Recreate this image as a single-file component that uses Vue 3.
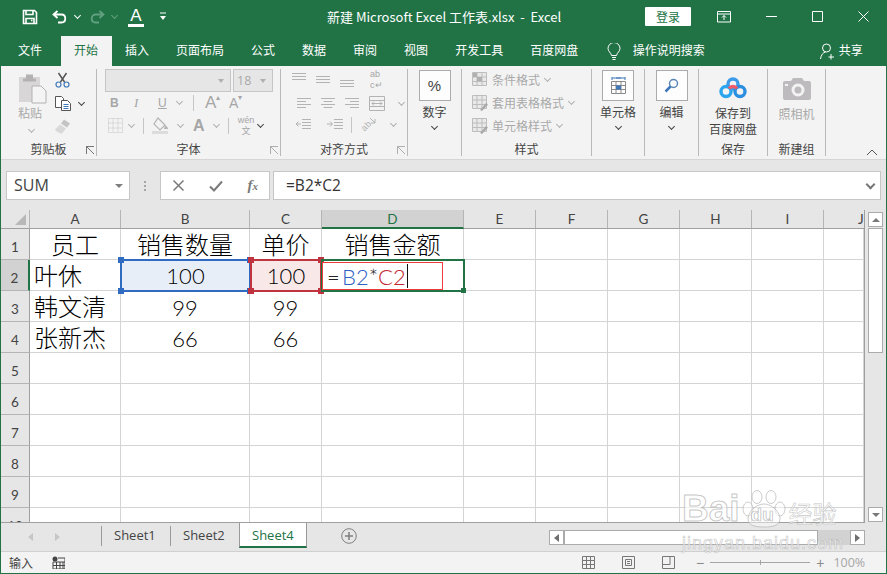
<template>
  <div class="excel">
    <div class="titlebar">
      <div class="qat">
        <svg class="ic save" width="16" height="16" viewBox="0 0 16 16"><path d="M1.500 1.500h11l2 2v11h-13z M4 1.500v4h7v-4 M4 14.500v-5h8v5 M9 11.500h1.500" fill="none" stroke="#fff" stroke-width="1.600"/></svg>
        <svg class="ic undo" width="16" height="16" viewBox="0 0 16 16"><path d="M5.500 2L1.500 5.500 5.500 9M2 5.500h7.500c5 0 5 8 0 8H6" fill="none" stroke="#fff" stroke-width="1.800"/></svg>
        <i class="chev white"></i>
        <svg class="ic redo" width="16" height="16" viewBox="0 0 16 16"><path d="M10.500 2L14.500 5.500 10.500 9M14 5.500H6.500c-5 0-5 8 0 8H10" fill="none" stroke="#62a07f" stroke-width="1.800"/></svg>
        <i class="chev dim"></i>
        <div class="qat-a"><span>A</span></div>
        <svg class="ic custom" width="8" height="9" viewBox="0 0 8 9"><path d="M1 1h6" stroke="#fff"/><path d="M1 4h6L4 8z" fill="#fff"/></svg>
      </div>
      <div class="doc-title">新建 Microsoft Excel 工作表.xlsx&nbsp; -&nbsp; Excel</div>
      <button class="login">登录</button>
      <div class="winbtns">
        <svg width="14" height="12" viewBox="0 0 14 12"><path d="M.5.500h13v10.500H.5zM.5 3h13M7 9V4.500M5 6.500l2-2 2 2" fill="none" stroke="#fff"/></svg>
        <svg width="11" height="11" viewBox="0 0 11 11"><path d="M0 5.500h11" stroke="#fff"/></svg>
        <svg width="11" height="11" viewBox="0 0 11 11"><path d="M.5.500h10v10H.5z" fill="none" stroke="#fff"/></svg>
        <svg width="11" height="11" viewBox="0 0 11 11"><path d="M.5.500l10 10M10.500.500l-10 10" fill="none" stroke="#fff"/></svg>
      </div>
    </div>

    <div class="tabs">
      <span v-for="t in ribbonTabs" :key="t" class="tab" :class="{ active: t === '开始', file: t === '文件' }">{{ t }}</span>
      <svg class="bulb" width="14" height="18" viewBox="0 0 14 18"><path d="M4.500 12.500C4 9.500 1 8.500 1 5.500a6 6 0 0 1 12 0c0 3-3 4-3.500 7zM5 14.500h4M5.500 16.500h3" fill="none" stroke="#fff"/></svg>
      <span class="tell">操作说明搜索</span>
      <svg class="person" width="15" height="17" viewBox="0 0 15 17"><circle cx="6.500" cy="5" r="4" fill="none" stroke="#fff"/><path d="M.5 16c.5-4 2.500-6.500 5-7M11 11v5.500M8.500 14h5.500" fill="none" stroke="#fff"/></svg>
      <span class="share">共享</span>
    </div>

    <div class="ribbon">
      <div class="group g-clip">
        <div class="gbody clip">
          <div class="paste">
            <svg width="30" height="31" viewBox="0 0 30 31"><path d="M1 4h21v25H1z" fill="#d9d6d8"/><path d="M8 1.500h7v4h3v3H5v-3h3z" fill="#b4b1b3"/><path d="M14 13h9l5 5v12H14z" fill="#f5f4f5" stroke="#b4b1b3"/></svg>
            <span class="off">粘贴</span>
            <i class="chev soft"></i>
          </div>
          <div class="clip-tools">
            <svg width="15" height="16" viewBox="0 0 15 16"><path d="M3.500 1l6 9M11.500 1l-6 9" stroke="#555" stroke-width="1.500"/><circle cx="3.500" cy="12.500" r="2.500" fill="none" stroke="#3f77b8" stroke-width="1.200"/><circle cx="11.500" cy="12.500" r="2.500" fill="none" stroke="#3f77b8" stroke-width="1.200"/></svg>
            <div class="row-g">
              <svg width="16" height="15" viewBox="0 0 16 15"><path d="M.5.500h6l2 2v9H.5z" fill="#fff" stroke="#555"/><path d="M6.500 4.500h6l3 3v7h-9z" fill="#fff" stroke="#555"/><path d="M8.500 8.500h5M8.500 10.500h5M8.500 12.500h5" stroke="#3f77b8"/></svg>
              <i class="chev dark"></i>
            </div>
            <svg width="16" height="15" viewBox="0 0 16 15"><path d="M9 .5l6 4-3 4-6-4z" fill="#c4c4c4"/><path d="M5 5.500l6 4-4 5c-3 0-6-2-7-4z" fill="#d9d9d9"/></svg>
          </div>
        </div>
        <div class="glabel"><span></span><span>剪贴板</span><i class="launch"></i></div>
      </div>

      <div class="group g-font">
        <div class="gbody font">
          <div class="row-g fonts">
            <div class="fbox name"><i class="down"></i></div>
            <div class="fbox size"><span>18</span><i class="down"></i></div>
          </div>
          <div class="row-g frow r2">
            <b class="fb">B</b><em class="fi">I</em><u class="fu">U</u><i class="chev soft"></i>
            <span class="vsep"></span>
            <span class="aa">A<sup>▴</sup></span><span class="aa small">A<sup>▾</sup></span>
          </div>
          <div class="row-g frow r3">
            <svg width="15" height="15" viewBox="0 0 15 15"><path d="M.5.500h14v14H.5zM5 .5v14M10 .5v14M.5 5h14M.5 10h14" fill="none" stroke="#c2c2c2" stroke-dasharray="1 1"/></svg>
            <i class="chev soft"></i>
            <span class="vsep"></span>
            <svg width="18" height="17" viewBox="0 0 18 17"><path d="M6 1l7 7-5 5-6-6z" fill="none" stroke="#b5b5b5" stroke-width="1.200"/><path d="M13 8c2 1 3 3 3 4H12z" fill="#b5b5b5"/><path d="M0 14h16v3H0z" fill="#dcdcdc"/></svg>
            <i class="chev soft"></i>
            <b class="fcolor">A</b>
            <i class="chev soft"></i>
            <span class="vsep"></span>
            <span class="wen"><small>wén</small><small class="wen-cn">文</small></span>
            <i class="chev dark"></i>
          </div>
        </div>
        <div class="glabel"><span></span><span>字体</span><i class="launch off-l"></i></div>
      </div>

      <div class="group g-align">
        <div class="gbody align">
          <div class="arow r1">
            <svg v-for="d in alignTop" :key="d" width="14" height="16" viewBox="0 0 14 16"><path :d="d" stroke="#b3b3b3"/></svg>
            <span class="wrap">ab<br>c↵</span>
          </div>
          <div class="arow r2">
            <svg v-for="d in alignMid" :key="d" width="14" height="11" viewBox="0 0 14 11"><path :d="d" stroke="#b3b3b3"/></svg>
            <svg width="16" height="15" viewBox="0 0 16 15"><path d="M.5.500h15v14H.5zM.5 4.500h15M.5 10.500h15M3 7.500h10M5 5.500l-2 2 2 2M11 5.500l2 2-2 2" fill="none" stroke="#b3b3b3"/></svg>
            <i class="chev soft"></i>
          </div>
          <div class="arow r3">
            <svg width="16" height="11" viewBox="0 0 16 11"><path d="M7 .5h9M7 3.500h9M7 6.500h9M7 9.500h9M6 5H1M3.500 2.500L1 5l2.500 2.500" fill="none" stroke="#b3b3b3"/></svg>
            <svg width="16" height="11" viewBox="0 0 16 11"><path d="M7 .5h9M7 3.500h9M7 6.500h9M7 9.500h9M0 5h5M3 2.500L5.500 5 3 7.500" fill="none" stroke="#b3b3b3"/></svg>
            <span class="vsep"></span>
            <svg width="17" height="17" viewBox="0 0 17 17"><text x="1" y="13" font-size="9" fill="#b3b3b3" font-family="Liberation Sans" transform="rotate(-45 6 10)">ab</text><path d="M10 2l5 5M15 3v4h-4" fill="none" stroke="#b3b3b3"/></svg>
            <i class="chev soft"></i>
          </div>
        </div>
        <div class="glabel"><span></span><span>对齐方式</span><i class="launch off-l"></i></div>
      </div>

      <div class="group g-num">
        <div class="gbody big">
          <div class="bigbox pct">%</div>
          <span class="lbl">数字</span>
          <i class="chev dark"></i>
        </div>
        <div class="glabel"></div>
      </div>

      <div class="group g-style">
        <div class="gbody styles">
          <div v-for="(s, i) in styleRows" :key="s" class="srow">
            <svg width="16" height="16" viewBox="0 0 16 16">
              <path d="M.5.500h14v13H.5zM.5 5h14M.5 9.500h14M5 .5v13M10 .5v13" fill="#e9e9e9" stroke="#bdbdbd"/>
              <path v-if="i === 0" d="M1 1h4v4H1zM5 5h5v4H5z" fill="#b0b0b0"/>
              <path v-else d="M8 15l6-7 2 1.500-6 6.500z" fill="#a9a9a9"/>
            </svg>
            <span>{{ s }}</span>
            <i class="chev soft"></i>
          </div>
        </div>
        <div class="glabel"><span></span><span>样式</span><span></span></div>
      </div>

      <div class="group g-cell">
        <div class="gbody big">
          <div class="bigbox">
            <svg width="15" height="17" viewBox="0 0 15 17"><path d="M1 1h13M1 0v3M14 0v3M5 1h5" fill="none" stroke="#3f77b8"/><path d="M.5 4.500h14v12H.5zM.5 8.500h14M.5 12.500h14M5 4.500v12M10 4.500v12" fill="none" stroke="#8a8a8a"/><path d="M5 8.500h5v4H5z" fill="#3f77b8"/></svg>
          </div>
          <span class="lbl">单元格</span>
          <i class="chev dark"></i>
        </div>
        <div class="glabel"></div>
      </div>

      <div class="group g-edit">
        <div class="gbody big">
          <div class="bigbox">
            <svg width="15" height="15" viewBox="0 0 15 15"><circle cx="9.500" cy="5.500" r="4" fill="none" stroke="#5b86b8" stroke-width="1.500"/><path d="M6.500 8.500L1.500 13.500" stroke="#3f77b8" stroke-width="2.500"/></svg>
          </div>
          <span class="lbl">编辑</span>
          <i class="chev dark"></i>
        </div>
        <div class="glabel"></div>
      </div>

      <div class="group g-save">
        <div class="gbody big cloud">
          <svg width="28" height="22" viewBox="0 0 28 22">
            <circle cx="14" cy="7" r="5" fill="none" stroke="#3b9be8" stroke-width="3.400"/>
            <circle cx="7" cy="14.500" r="5" fill="none" stroke="#2aa5ee" stroke-width="3.400"/>
            <circle cx="21" cy="14.500" r="5" fill="none" stroke="#2b8fe0" stroke-width="3.400"/>
            <path d="M10 11.500a5 5 0 0 1 8 0" fill="none" stroke="#ef5a6b" stroke-width="3.400"/>
          </svg>
          <span class="lbl two">保存到<br>百度网盘</span>
        </div>
        <div class="glabel"><span></span><span>保存</span><span></span></div>
      </div>

      <div class="group g-cam">
        <div class="gbody big cloud">
          <svg width="28" height="23" viewBox="0 0 28 23"><path d="M2 4h6l2-3h9l2 3h5a2 2 0 0 1 2 2v15a2 2 0 0 1-2 2H2a2 2 0 0 1-2-2V6a2 2 0 0 1 2-2z" fill="#bdbbbd"/><circle cx="15" cy="13" r="6.500" fill="#f3f3f3"/><circle cx="15" cy="13" r="3.500" fill="#bdbbbd"/><path d="M2 7h3v2H2z" fill="#f3f3f3"/></svg>
          <span class="lbl off">照相机</span>
        </div>
        <div class="glabel"><span></span><span>新建组</span><span></span></div>
      </div>

      <svg class="collapse" width="12" height="7" viewBox="0 0 12 7"><path d="M1 6l5-5 5 5" fill="none" stroke="#555"/></svg>
    </div>

    <div class="formula">
      <div class="namebox"><span>SUM</span><i class="down"></i></div>
      <div class="dots"><i></i><i></i><i></i></div>
      <div class="fxbox">
        <svg width="13" height="13" viewBox="0 0 13 13"><path d="M1.500 1.500l10 10M11.500 1.500l-10 10" stroke="#7a7a7a" stroke-width="1.500"/></svg>
        <svg width="14" height="12" viewBox="0 0 14 12"><path d="M1 6.500l4 4 8-9" fill="none" stroke="#7a7a7a" stroke-width="2"/></svg>
        <em class="fx">f<small>x</small></em>
      </div>
      <div class="fbar">
        <span>=B2*C2</span>
        <i class="fbar-chev"></i>
      </div>
    </div>

    <div class="sheetwrap">
      <div class="sheet">
        <div class="grid">
          <div class="corner"><i></i></div>
          <div v-for="c in cols" :key="c" class="colhead" :class="{ sel: c === 'D', cut: c === 'J' }">{{ c }}</div>
          <template v-for="(r, ri) in rows" :key="ri">
            <div class="rowhead" :class="{ sel: ri === 1 }">{{ ri + 1 }}</div>
            <div v-for="(v, ci) in r" :key="ci" class="cell" :class="{ left: ci === 0 && ri > 0, cjk: /\D/.test(v) }">{{ v }}</div>
          </template>

          <div class="ref blue"><span>100</span><i class="h tl"></i><i class="h tr"></i><i class="h bl"></i><i class="h br"></i></div>
          <div class="ref red"><span>100</span><i class="h tl"></i><i class="h tr"></i><i class="h bl"></i><i class="h br"></i></div>
          <div class="active-cell"><i class="fill"></i></div>
          <div class="editor"><span class="eq">=</span><span class="cb">B2</span><span>*</span><span class="cr">C2</span><i class="caret"></i></div>
        </div>
      </div>
      <div class="vscroll">
        <div class="sbtn"><i class="up"></i></div>
        <div class="vthumb"></div>
        <div class="vspace"></div>
        <div class="sbtn last"><i class="down"></i></div>
      </div>
    </div>

    <div class="tabbar">
      <div class="navs"><i class="tri l"></i><i class="tri r"></i></div>
      <div class="sheets">
        <span v-for="s in sheets" :key="s" class="stab" :class="{ on: s === 'Sheet4' }">{{ s }}</span>
      </div>
      <svg class="plus" width="16" height="16" viewBox="0 0 16 16"><circle cx="8" cy="8" r="7.300" fill="none" stroke="#7f7f7f"/><path d="M8 4v8M4 8h8" stroke="#7f7f7f" stroke-width="1.500"/></svg>
      <div class="hscroll">
        <div class="hbtn"><i class="tri l dark"></i></div>
        <div class="hthumb"></div>
        <div class="hbtn"><i class="tri r dark"></i></div>
      </div>
    </div>

    <div class="status">
      <span>输入</span>
      <svg class="macro" width="13" height="13" viewBox="0 0 13 13"><circle cx="3" cy="3" r="2.500" fill="#444"/><path d="M6 2h7v11H1V6h12M4.500 6v7M8 6v7M11 6v7M1 9.500h12" fill="none" stroke="#444"/></svg>
      <div class="views">
        <svg width="13" height="13" viewBox="0 0 13 13"><path d="M.5.500h12v12H.5zM4.500.5v12M8.500.5v12M.5 4.500h12M.5 8.500h12" fill="none" stroke="#777"/></svg>
        <svg width="13" height="13" viewBox="0 0 13 13"><path d="M.5.500h12v12H.5zM3.500 3.500h6v6h-6zM5 5.500h3M5 7.500h3" fill="none" stroke="#777"/></svg>
        <svg width="13" height="13" viewBox="0 0 13 13"><path d="M.5.500h12v12H.5zM.5 8.500h7.500v-8M.5 8.500" fill="none" stroke="#777"/></svg>
      </div>
      <div class="zoomer">
        <span class="pm">−</span>
        <div class="slider"><i></i></div>
        <span class="pm">+</span>
      </div>
      <span class="pct-zoom">100%</span>
    </div>

    <div class="watermark">
      <div class="wm-main">
        <span>Bai</span>
        <span class="wm-paw">
          <svg width="50" height="38" viewBox="0 0 50 38">
            <g fill="rgba(255,255,255,.45)" stroke="rgba(170,170,170,.6)">
              <ellipse cx="9" cy="19" rx="5" ry="7"/>
              <ellipse cx="18" cy="7" rx="5" ry="6.500"/>
              <ellipse cx="32" cy="7" rx="5" ry="6.500"/>
              <ellipse cx="41" cy="19" rx="5" ry="7"/>
              <path d="M25 14c8 0 16 8 16 15 0 6-6 8-16 8S9 35 9 29c0-7 8-15 16-15z"/>
            </g>
          </svg>
          <b>du</b>
        </span>
        <span class="wm-cn">经验</span>
      </div>
      <div class="wm-sub">jingyan.baidu.com</div>
    </div>
  </div>
</template>

<script setup>
const ribbonTabs = ['文件', '开始', '插入', '页面布局', '公式', '数据', '审阅', '视图', '开发工具', '百度网盘']
const cols = ['A', 'B', 'C', 'D', 'E', 'F', 'G', 'H', 'I', 'J']
const sheets = ['Sheet1', 'Sheet2', 'Sheet4']
const styleRows = ['条件格式', '套用表格格式', '单元格样式']

const blank = ['', '', '', '', '', '']
const rows = [
  ['员工', '销售数量', '单价', '销售金额', ...blank],
  ['叶休', '', '', '', ...blank],
  ['韩文清', '99', '99', '', ...blank],
  ['张新杰', '66', '66', '', ...blank],
  ...Array.from({ length: 6 }, () => ['', '', '', '', ...blank])
]

const alignTop = ['M0 1.500h14M0 4.500h14M0 7.500h14', 'M0 4.500h14M0 7.500h14M0 10.500h14', 'M0 8.500h14M0 11.500h14M0 14.500h14']
const alignMid = ['M0 .5h14M0 3.500h9M0 6.500h14M0 9.500h9', 'M0 .5h14M2.500 3.500h9M0 6.500h14M2.500 9.500h9', 'M0 .5h14M5 3.500h9M0 6.500h14M5 9.500h9']
</script>

<style>
html, body { margin: 0; background: #fff; }
</style>

<style scoped>
.excel {
  position: relative;
  width: 887px;
  height: 574px;
  box-sizing: border-box;
  border: 1px solid #217346;
  border-top: 0;
  display: flex;
  flex-direction: column;
  overflow: hidden;
  font-family: "Noto Sans CJK SC", "Open Sans", sans-serif;
  font-size: 12px;
  color: #444;
}
svg { display: block; flex: none; }

.chev {
  display: inline-block;
  flex: none;
  width: 4px;
  height: 4px;
  border-right: 1px solid #444;
  border-bottom: 1px solid #444;
  transform: rotate(45deg);
}
.chev.white { border-color: #fff; }
.chev.dim { border-color: #62a07f; }
.chev.soft { border-color: #b0b0b0; }
.chev.dark { border-color: #444; }
.down {
  display: inline-block;
  width: 0;
  height: 0;
  border-left: 4px solid transparent;
  border-right: 4px solid transparent;
  border-top: 4px solid #9a9a9a;
}
.up {
  display: inline-block;
  width: 0;
  height: 0;
  border-left: 6px solid transparent;
  border-right: 6px solid transparent;
  border-bottom: 6px solid #7a7a7a;
}

/* title bar */
.titlebar {
  height: 33px;
  background: #217346;
  display: flex;
  align-items: center;
  color: #fff;
  flex: none;
}
.qat { display: flex; align-items: center; width: 326px; padding-left: 21px; box-sizing: border-box; }
.qat .undo { margin-left: 14px; }
.qat .chev { margin: 0 0 2px 7px; }
.qat .redo { margin-left: 9px; }
.qat-a {
  margin-left: 11px;
  width: 16px;
  border-bottom: 3px solid #fff;
  text-align: center;
  font: 17px/17px "Liberation Sans", sans-serif;
}
.qat .custom { margin-left: 15px; }
.doc-title { width: 318px; font: 13px "Noto Sans CJK SC", "Open Sans", sans-serif; white-space: nowrap; }
.login {
  width: 46px;
  height: 19px;
  padding: 0;
  border: 0;
  border-radius: 1px;
  background: #fff;
  color: #217346;
  font: 12px "Noto Sans CJK SC", sans-serif;
}
.winbtns { display: flex; align-items: center; margin-left: 26px; gap: 35px; }

/* ribbon tabs */
.tabs {
  height: 33px;
  background: #217346;
  display: flex;
  align-items: flex-end;
  color: #fff;
  flex: none;
}
.tab { padding: 0 13.500px; height: 30px; line-height: 27px; }
.tab.file { padding-left: 17px; margin-right: 5px; }
.tab.active { background: #f3f3f3; color: #217346; }
.bulb { margin: 0 0 5px 15px; }
.tell { margin-left: 12px; height: 30px; line-height: 27px; }
.person { margin: 0 0 6px 115px; }
.share { margin-left: 4px; height: 30px; line-height: 27px; }

/* ribbon */
.ribbon {
  position: relative;
  height: 94px;
  box-sizing: border-box;
  background: #f3f3f3;
  border-bottom: 1px solid #d6d6d6;
  padding: 3px 0 3px;
  display: flex;
  flex: none;
}
.group {
  display: flex;
  flex-direction: column;
  box-sizing: border-box;
  border-right: 1px solid #b9b9b9;
}
.gbody { flex: 1; min-height: 0; }
.glabel {
  height: 15px;
  display: grid;
  grid-template-columns: 1fr auto 1fr;
  align-items: center;
  line-height: 15px;
  color: #444;
}
.launch {
  justify-self: end;
  width: 7px;
  height: 7px;
  margin: 3px 2px 0 0;
  border-left: 1px solid #777;
  border-top: 1px solid #777;
  background: linear-gradient(45deg, transparent 45%, #777 45%, #777 55%, transparent 55%);
}
.launch.off-l { opacity: .55; }
.off { color: #a9a9a9; }
.row-g { display: flex; align-items: center; }
.vsep { flex: none; width: 1px; height: 16px; background: #c6c6c6; }

.g-clip { width: 96px; }
.g-font { width: 184px; }
.g-align { width: 127px; }
.g-num { width: 54px; }
.g-style { width: 130px; }
.g-cell { width: 53px; }
.g-edit { width: 54px; }
.g-save { width: 69px; }
.g-cam { width: 58px; }

.clip { display: flex; padding: 4px 0 0 17px; }
.paste { display: flex; flex-direction: column; align-items: flex-start; width: 37px; }
.paste span { margin-top: 1px; line-height: 16px; }
.paste .chev { margin: 6px 0 0 11px; }
.clip-tools { display: flex; flex-direction: column; gap: 8px; margin-top: -1px; }
.clip-tools .chev { margin: 0 0 2px 8px; }

.font { padding-left: 8px; }
.fonts { gap: 2px; }
.fbox {
  box-sizing: border-box;
  height: 23px;
  background: #e6e6e6;
  border: 1px solid #c6c6c6;
  display: flex;
  align-items: center;
  justify-content: flex-end;
  padding-right: 6px;
}
.fbox.name { width: 126px; }
.fbox.size { width: 40px; justify-content: space-between; padding-left: 3px; }
.fbox span { font: 12.500px "Open Sans", sans-serif; color: #a9a9a9; }
.fbox .down { border-left-width: 3px; border-right-width: 3px; border-top-color: #b0b0b0; }
.frow { height: 21px; color: #a6a6a6; }
.r2 { margin-top: 0; padding-left: 5px; }
.r3 { margin-top: 2px; padding-left: 3px; }
.fb, .fi, .fu { width: 24px; font: bold 12px "Liberation Sans", sans-serif; flex: none; }
.fi { font: italic 13px "Liberation Serif", serif; }
.fu { width: 15px; font-weight: normal; }
.r2 .chev { margin: 0 11px 2px 4px; }
.aa { width: 24px; font: 17px "Liberation Sans", sans-serif; margin-left: 11px; flex: none; color: #a6a6a6; }
.aa + .aa { margin-left: 0; }
.aa.small { font-size: 14px; }
.aa sup { font-size: 8px; line-height: 0; vertical-align: 8px; }
.r3 .chev { margin: 0 0 2px 0; }
.r3 svg + .chev { margin: 0 9px 2px 6px; }
.r3 svg:nth-of-type(2) + .chev { margin: 0 0 2px 8px; }
.r3 svg:nth-of-type(2) { margin-left: 8px; }
.fcolor { font: bold 16px "Liberation Sans", sans-serif; margin-left: 10px; width: 21px; }
.fcolor + .chev { margin-right: 9px !important; }
.wen { width: 24px; margin-left: 5px; display: flex; flex-direction: column; align-items: center; }
.wen small { font: 9px/10px "Liberation Sans", sans-serif; }
.wen small.wen-cn { font: 9px/13px "Noto Sans CJK SC", sans-serif; margin-top: -1px; }

.align { padding: 2px 0 0 11px; display: flex; flex-direction: column; }
.arow { display: flex; align-items: center; gap: 10px; }
.arow.r1 { height: 17px; }
.arow.r2 { height: 21px; margin-top: 5px; }
.arow.r3 { height: 21px; margin-top: 0; gap: 8px; }
.wrap { font: 9px/10.500px "Liberation Sans", sans-serif; color: #a6a6a6; margin-left: 6px; }

.big { display: flex; flex-direction: column; align-items: center; }
.bigbox {
  box-sizing: border-box;
  width: 32px;
  height: 31px;
  margin-top: 1px;
  background: #fdfdfd;
  border: 1px solid #ababab;
  display: flex;
  align-items: center;
  justify-content: center;
}
.pct { font: 15px "Liberation Sans", sans-serif; color: #444; }
.lbl { line-height: 16px; margin-top: 3px; white-space: nowrap; text-align: center; }
.big .chev { margin-top: 4px; }
.cloud > svg { margin-top: 8px; }
.cloud .lbl { margin-top: 6px; }

.styles { padding: 2px 0 0 10px; display: flex; flex-direction: column; gap: 6px; }
.srow { display: flex; align-items: center; height: 17px; color: #a9a9a9; }
.srow span { margin-left: 4px; }
.srow .chev { margin: 0 0 2px 5px; }

.collapse { position: absolute; right: 8px; bottom: 3px; }

/* formula bar */
.formula {
  height: 45px;
  box-sizing: border-box;
  background: #e6e6e6;
  display: flex;
  align-items: flex-start;
  padding: 11px 5px 0 5px;
  flex: none;
}
.namebox, .fxbox, .fbar {
  box-sizing: border-box;
  height: 29px;
  background: #fff;
  border: 1px solid #c6c6c6;
  display: flex;
  align-items: center;
}
.namebox {
  width: 124px;
  justify-content: space-between;
  padding: 0 6px 2px 7px;
  font: 16px "Open Sans", sans-serif;
  color: #444;
}
.namebox .down { border-top-color: #7f7f7f; margin-top: 2px; }
.dots { width: 30px; display: flex; flex-direction: column; align-items: center; gap: 2px; padding-top: 10px; }
.dots i { width: 2px; height: 2px; background: #a6a6a6; }
.fxbox { width: 110px; justify-content: space-between; padding: 0 11px 0 11px; }
.fx { font: italic bold 15px "Liberation Serif", serif; color: #7a7a7a; }
.fx small { font-size: 11px; }
.fbar {
  width: 608px;
  margin-left: 3px;
  padding: 0 0 2px 12px;
  justify-content: space-between;
  font: 15.500px "Open Sans", sans-serif;
  color: #333;
}
.fbar-chev {
  width: 5px;
  height: 5px;
  margin: 0 6px 1px 0;
  border-right: 2px solid #777;
  border-bottom: 2px solid #777;
  transform: rotate(45deg);
}

/* sheet */
.sheetwrap {
  flex: none;
  height: 318px;
  background: #e6e6e6;
  display: flex;
  box-sizing: border-box;
  padding-top: 5px;
}
.sheet {
  width: 864px;
  box-sizing: border-box;
  border-bottom: 1px solid #9f9f9f;
  border-right: 1px solid #9f9f9f;
  overflow: hidden;
  background: #fff;
}
.grid {
  position: relative;
  display: grid;
  grid-template-columns: 29px 91px 129px 72px 142px 72px 72px 72px 72px 72px 40px;
  grid-template-rows: 19px repeat(10, 31px);
}
.corner {
  background: #e6e6e6;
  border-bottom: 1px solid #9f9f9f;
  border-right: 1px solid #b5b5b5;
  box-sizing: border-box;
  position: relative;
}
.corner i {
  position: absolute;
  right: 3px;
  bottom: 3px;
  border-left: 11px solid transparent;
  border-bottom: 11px solid #b8b8b8;
}
.colhead {
  background: #e6e6e6;
  box-sizing: border-box;
  border-bottom: 1px solid #9f9f9f;
  border-right: 1px solid #b5b5b5;
  text-align: center;
  font: 13.500px/19px Lato, sans-serif;
  color: #444;
}
.colhead.sel { background: #d2d2d2; color: #217346; border-bottom: 2px solid #217346; }
.colhead.cut { text-align: left; padding-left: 34px; overflow: hidden; border-right: 0; }
.rowhead {
  background: #e6e6e6;
  box-sizing: border-box;
  border-bottom: 1px solid #b5b5b5;
  border-right: 1px solid #9f9f9f;
  text-align: center;
  font: 13.500px/37px Lato, sans-serif;
  color: #444;
}
.rowhead.sel { background: #d2d2d2; border-right: 2px solid #217346; }
.cell {
  box-sizing: border-box;
  border-right: 1px solid #d4d4d4;
  border-bottom: 1px solid #d4d4d4;
  text-align: center;
  font: 300 22px/33px Lato, "Noto Sans CJK SC", sans-serif;
  color: #000;
  white-space: nowrap;
  overflow: hidden;
}
.cell.cjk { font-size: 24px; line-height: 31px; }
.cell.left { text-align: left; padding-left: 4px; }

.ref {
  position: absolute;
  box-sizing: border-box;
  top: 49px;
  height: 33px;
  border: 2px solid;
  text-align: center;
  font: 300 22px/30px Lato, sans-serif;
  color: #000;
}
.ref.blue { left: 119px; width: 131px; background: #e8eef8; border-color: #2f6bc0; }
.ref.red { left: 249px; width: 72px; background: #f8e8e8; border-color: #c0343f; }
.ref .h { position: absolute; width: 6px; height: 6px; }
.ref.blue .h { background: #2f6bc0; }
.ref.red .h { background: #c0343f; }
.h.tl { left: -4px; top: -4px; }
.h.tr { right: -4px; top: -4px; }
.h.bl { left: -4px; bottom: -4px; }
.h.br { right: -4px; bottom: -4px; }
.active-cell {
  position: absolute;
  box-sizing: border-box;
  left: 320px;
  top: 49px;
  width: 144px;
  height: 33px;
  border: 2px solid #217346;
}
.fill { position: absolute; right: -3px; bottom: -3px; width: 5px; height: 5px; background: #217346; }
.editor {
  position: absolute;
  box-sizing: border-box;
  left: 321px;
  top: 52px;
  width: 121px;
  height: 28px;
  padding-left: 4px;
  background: #fff;
  border: 1px solid #ef3a3a;
  display: flex;
  align-items: center;
  font: 300 22px Lato, sans-serif;
  color: #222;
}
.eq { width: 15px; }
.cb { color: #2f62c4; }
.cr { color: #c42630; }
.caret { width: 1px; height: 24px; margin-left: 1px; background: #111; }

.vscroll { width: 21px; display: flex; flex-direction: column; align-items: center; padding-top: 2px; box-sizing: border-box; }
.sbtn {
  box-sizing: border-box;
  width: 15px;
  height: 15px;
  background: #fff;
  border: 1px solid #ababab;
  display: flex;
  align-items: center;
  justify-content: center;
}
.sbtn .up { border-width: 0 4px 4px; border-color: transparent transparent #7a7a7a; }
.sbtn .down { border-top-color: #7a7a7a; }
.vthumb { box-sizing: border-box; width: 15px; height: 125px; margin-top: 1px; background: #fff; border: 1px solid #ababab; }
.vspace { flex: 1; }
.sbtn.last { margin-bottom: 1px; }

/* sheet tabs */
.tabbar {
  flex: none;
  height: 28px;
  background: #e6e6e6;
  display: flex;
  align-items: flex-start;
  font-family: "Open Sans", sans-serif;
}
.navs { width: 100px; display: flex; gap: 22px; padding: 10px 0 0 27px; box-sizing: border-box; }
.tri { display: block; width: 0; height: 0; border-top: 4px solid transparent; border-bottom: 4px solid transparent; }
.tri.l { border-right: 5px solid #c6c6c6; }
.tri.r { border-left: 5px solid #c6c6c6; }
.tri.l.dark { border-right-color: #6f6f6f; }
.tri.r.dark { border-left-color: #6f6f6f; }
.sheets { display: flex; height: 26px; }
.stab {
  box-sizing: border-box;
  height: 20px;
  margin-top: 3px;
  padding: 0 12px;
  border-left: 1px solid #9a9a9a;
  font-size: 13px;
  line-height: 18px;
  color: #444;
  width: 69px;
}
.stab.on {
  height: 25px;
  margin: 0;
  width: 68px;
  padding: 3px 0 0 12px;
  background: #fff;
  color: #217346;
  border-left: 1px solid #9a9a9a;
  border-right: 1px solid #9a9a9a;
  border-bottom: 2px solid #217346;
}
.plus { margin: 5px 0 0 34px; }
.hscroll { display: flex; margin: 7px 0 0 192px; width: 316px; background: #d2d2d2; justify-content: flex-start; position: relative; }
.hbtn {
  box-sizing: border-box;
  width: 15px;
  height: 15px;
  background: #fff;
  border: 1px solid #ababab;
  display: flex;
  align-items: center;
  justify-content: center;
  flex: none;
}
.hthumb { box-sizing: border-box; width: 254px; height: 15px; margin: 0 32px 0 0; background: #fff; border: 1px solid #ababab; }

/* status */
.status {
  flex: 1;
  box-sizing: border-box;
  background: #f3f3f3;
  border-top: 1px solid #d0d0d0;
  display: flex;
  align-items: center;
  padding-left: 8px;
  color: #444;
}
.macro { margin-left: 19px; }
.views { display: flex; gap: 27px; margin-left: 517px; }
.zoomer { display: flex; align-items: center; margin-left: 21px; color: #8a8a8a; }
.pm { font: 14px/16px "Liberation Sans", sans-serif; }
.slider { position: relative; width: 100px; height: 1px; margin: 0 6px; background: #a6a6a6; }
.slider i { position: absolute; left: 50px; top: -2px; width: 1px; height: 5px; background: #a6a6a6; }
.pct-zoom { margin-left: 9px; font: 12.500px "Open Sans", sans-serif; color: #a6a6a6; }

/* watermark */
.watermark { position: absolute; left: 681px; top: 490px; width: 170px; color: rgba(255, 255, 255, .65); pointer-events: none; }
.wm-main {
  display: flex;
  align-items: flex-end;
  height: 38px;
  font: bold 37px/38px "Liberation Sans", sans-serif;
  -webkit-text-stroke: 1px rgba(175, 175, 175, .7);
}
.wm-paw { position: relative; width: 50px; height: 38px; margin-left: -1px; }
.wm-paw svg { position: absolute; left: 0; top: 0; }
.wm-paw b { position: absolute; left: 12px; bottom: 4px; font-size: 19px; line-height: 19px; color: rgba(255, 255, 255, .6); -webkit-text-stroke: .7px rgba(150, 150, 150, .7); }
.wm-cn { font: 400 24px/30px "Noto Sans CJK SC", sans-serif; -webkit-text-stroke: .6px rgba(175, 175, 175, .7); }
.wm-sub {
  margin-top: 5px;
  font: 18px/20px "Liberation Sans", sans-serif;
  letter-spacing: 1px;
  white-space: nowrap;
  -webkit-text-stroke: .7px rgba(175, 175, 175, .65);
}
</style>
